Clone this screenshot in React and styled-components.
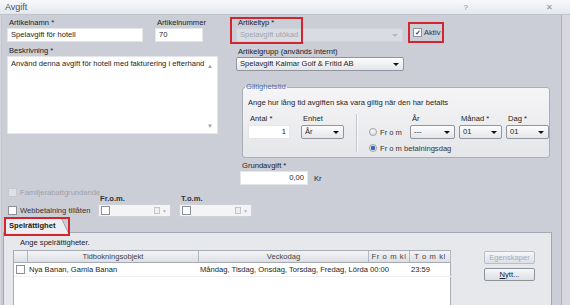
import React from 'react';
import styled, { createGlobalStyle, css } from 'styled-components';

const GlobalStyle = createGlobalStyle`
  html, body { margin: 0; padding: 0; }
  body {
    width: 570px;
    height: 305px;
    overflow: hidden;
    background: #d6d8de;
    font-family: "Liberation Sans", Arial, sans-serif;
    font-size: 7.6px;
    color: #1e1e1e;
  }
`;

const Window = styled.div`
  width: 570px;
  height: 305px;
  display: flex;
  flex-direction: column;
`;

const TitleBar = styled.div`
  height: 14px;
  flex: none;
  display: flex;
  align-items: center;
  justify-content: space-between;
  padding: 0 0 0 5px;
  background: linear-gradient(#f7f8fa, #e4e7ec);
  border-bottom: 1px solid #bfc3cb;
`;

const TitleText = styled.span`
  font-size: 9px;
  color: #4d5362;
`;

const TitleActions = styled.div`
  display: flex;
  gap: 78px;
  padding-right: 17px;
  color: #8a8f99;
  font-size: 8px;
`;

const Frame = styled.div`
  flex: 1;
  display: flex;
  min-height: 0;
`;

const Content = styled.div`
  width: 558px;
  background: #cbced7;
  border-left: 1px solid #c3c6ce;
  border-right: 1px solid #aeb2bc;
  margin-left: 1px;
  padding-left: 1px;
  overflow: hidden;
`;

const TopGrid = styled.div`
  display: grid;
  grid-template-columns: 212px 314px;
  column-gap: 17px;
  margin-left: 4px;
  padding-top: 3px;
`;

const Column = styled.div`
  display: flex;
  flex-direction: column;
`;

const FieldRow = styled.div`
  position: relative;
  display: flex;
  align-items: flex-start;
  gap: ${(p) => p.gap || 0}px;
`;

const Field = styled.div`
  display: flex;
  flex-direction: column;
  width: ${(p) => p.w}px;
  margin-top: ${(p) => p.mt || 0}px;
  margin-left: ${(p) => p.ml || 0}px;
`;

const Label = styled.div`
  height: ${(p) => p.h || 10}px;
  line-height: 10px;
  padding-left: 2px;
  color: ${(p) => (p.strong ? '#333' : '#222')};
  font-weight: ${(p) => (p.strong ? 'bold' : 'normal')};
  white-space: nowrap;
`;

const Unit = styled.span`
  margin-top: 16px;
  line-height: 10px;
  color: #222;
`;

const TextInput = styled.div`
  height: 14px;
  box-sizing: border-box;
  background: #fff;
  border: 1px solid #e4e6ea;
  padding: 0 3px;
  line-height: 12px;
  text-align: ${(p) => (p.right ? 'right' : 'left')};
  white-space: nowrap;
`;

const TextArea = styled.div`
  position: relative;
  height: 78px;
  width: 211px;
  box-sizing: border-box;
  background: #fff;
  border: 1px solid #e4e6ea;
  padding: 2px 14px 0 3px;
  line-height: 10px;
  white-space: nowrap;
`;

const ScrollArrow = styled.span`
  position: absolute;
  right: 4px;
  ${(p) => (p.down ? 'bottom: 2px;' : 'top: 4px;')}
  font-size: 6px;
  color: #9a9ea6;
`;

const Combo = styled.div`
  position: relative;
  height: 14px;
  box-sizing: border-box;
  border-radius: 2px;
  padding: 0 14px 0 3px;
  line-height: 12px;
  white-space: nowrap;
  ${(p) =>
    p.disabled
      ? css`
          background: #dadce3;
          border: 1px solid #d2d4db;
          color: #a2a5ae;
        `
      : css`
          background: linear-gradient(#fdfdfe, #e3e5e9);
          border: 1px solid #8f949d;
          color: #1e1e1e;
        `}
`;

const Arrow = styled.span`
  position: absolute;
  right: 4px;
  top: 5px;
  width: 0;
  height: 0;
  border-left: 3px solid transparent;
  border-right: 3px solid transparent;
  border-top: 3px solid ${(p) => (p.light ? '#b5b8c0' : '#111')};
`;

const Highlight = styled.div`
  position: absolute;
  left: ${(p) => p.x}px;
  top: ${(p) => p.y}px;
  width: ${(p) => p.w}px;
  height: ${(p) => p.h}px;
  box-sizing: border-box;
  border: 2px solid #d1262f;
  pointer-events: none;
  z-index: 3;
`;

const AktivBox = styled.div`
  display: flex;
  align-items: center;
  gap: 2px;
  margin: 4px 0 0 5px;
  width: 36px;
  height: 21px;
  box-sizing: border-box;
  border: 2px solid #d1262f;
  padding-left: 3px;
`;

const CheckBox = styled.span`
  display: inline-flex;
  align-items: center;
  justify-content: center;
  flex: none;
  width: 9px;
  height: 9px;
  box-sizing: border-box;
  border: 1px solid ${(p) => (p.disabled ? '#c5c8cf' : '#8b9099')};
  background: ${(p) => (p.disabled ? '#dfe1e6' : '#fff')};
  color: #2b3f73;
  font-size: 7px;
  line-height: 7px;
  font-weight: bold;
`;

const CheckText = styled.span`
  color: ${(p) => (p.muted ? '#9ea1aa' : '#333')};
  white-space: nowrap;
`;

const GroupBox = styled.div`
  position: relative;
  margin: 16px 0 0 6px;
  width: 308px;
  height: 71px;
  box-sizing: border-box;
  border: 1px solid #a9adb6;
  border-radius: 3px;
  background: linear-gradient(#f5f5f7, #e5e6e9);
  padding: 10px 0 0 5px;
`;

const Legend = styled.span`
  position: absolute;
  left: 2px;
  top: -6px;
  padding: 0 1px;
  line-height: 10px;
  color: #4a6fae;
  background: linear-gradient(#cbced7 50%, #f5f5f7 50%);
`;

const GroupText = styled.div`
  line-height: 10px;
  white-space: nowrap;
`;

const GroupRow = styled.div`
  display: flex;
  align-items: flex-start;
  margin-top: 6px;
`;

const Separator = styled.div`
  width: 1px;
  height: 38px;
  margin: 0 11px 0 12px;
  background: #c2c5cc;
  border-right: 1px solid #fafafa;
`;

const RadioPart = styled.div`
  display: grid;
  grid-template-columns: 37px 45px 43px 43px;
  column-gap: 4px;
  row-gap: 2px;
`;

const RadioRow = styled.div`
  display: flex;
  align-items: center;
  gap: 3px;
  height: 14px;
  margin-top: ${(p) => p.mt || 0}px;
  grid-column: ${(p) => p.span || 'auto'};
  white-space: nowrap;
  color: #333;
`;

const Radio = styled.span`
  flex: none;
  width: 8px;
  height: 8px;
  box-sizing: border-box;
  border-radius: 50%;
  border: 1px solid #9ca0a8;
  background: ${(p) =>
    p.checked
      ? 'radial-gradient(circle, #3a66b0 0 2px, #e7ebf2 2.5px)'
      : 'linear-gradient(#fafafa, #dfe1e5)'};
`;

const Options = styled.div`
  display: flex;
  align-items: flex-start;
  height: 30px;
  margin: 2px 0 0 5px;
`;

const CheckColumn = styled.div`
  display: flex;
  flex-direction: column;
  gap: 8px;
  width: 90px;
`;

const CheckRow = styled.div`
  display: flex;
  align-items: center;
  gap: 3px;
  height: 10px;
`;

const DatePicker = styled.div`
  display: flex;
  align-items: center;
  justify-content: space-between;
  height: 13px;
  box-sizing: border-box;
  background: #f4f4f6;
  border: 1px solid #cfd1d7;
  padding: 0 3px 0 2px;
`;

const CalendarIcon = styled.span`
  display: flex;
  align-items: center;
  gap: 2px;
  color: #b1b4bb;
  font-size: 5px;
`;

const CalendarPage = styled.span`
  width: 6px;
  height: 7px;
  box-sizing: border-box;
  border: 1px solid #c2c5cc;
  background: #eceef1;
`;

const TabArea = styled.div`
  position: relative;
  width: 549px;
`;

const TabStrip = styled.div`
  height: 15px;
  display: flex;
  padding-left: 2px;
`;

const Tab = styled.div`
  position: relative;
  z-index: 1;
  width: 64px;
  height: 16px;
  font-weight: bold;
  line-height: 17px;
  color: #1a1a1a;
`;

const TabShape = styled.svg`
  position: absolute;
  left: 0;
  top: 0;
`;

const TabLabel = styled.span`
  position: relative;
  padding-left: 4px;
`;

const TabPanel = styled.div`
  height: 80px;
  box-sizing: border-box;
  border: 1px solid #a3a7b1;
  background: #e7e8ec;
  padding: 5px 0 0 9px;
`;

const PanelText = styled.div`
  line-height: 10px;
  padding-left: 7px;
  color: #222;
`;

const PanelBody = styled.div`
  display: flex;
  align-items: flex-start;
  margin-top: 2px;
`;

const Table = styled.div`
  width: 438px;
  height: 60px;
  box-sizing: border-box;
  border: 1px solid #a8acb4;
  background: #fff;
`;

const TableGrid = styled.div`
  display: grid;
  grid-template-columns: 14px 171px 170px 41px 41px;
`;

const HeadCell = styled.div`
  height: 12px;
  line-height: 12px;
  box-sizing: border-box;
  background: linear-gradient(#f3f4f6, #dcdfe4);
  border-right: 1px solid #b3b7bf;
  border-bottom: 1px solid #a5a9b2;
  text-align: center;
  letter-spacing: ${(p) => (p.spaced ? 0.6 : 0)}px;
  color: #444;
  white-space: nowrap;
  overflow: hidden;
`;

const Cell = styled.div`
  height: 13px;
  line-height: 13px;
  padding-left: ${(p) => (p.pad ? p.pad : 1)}px;
  white-space: nowrap;
  overflow: hidden;
  display: flex;
  align-items: center;
  border-bottom: 1px solid #eef0f3;
`;

const ButtonColumn = styled.div`
  display: flex;
  flex-direction: column;
  gap: 4px;
  margin: 1px 0 0 33px;
`;

const Button = styled.div`
  width: 51px;
  height: 13px;
  box-sizing: border-box;
  border-radius: 2px;
  border: 1px solid ${(p) => (p.disabled ? '#babec6' : '#8d929b')};
  background: linear-gradient(#f6f7f9, #dcdfe4);
  color: ${(p) => (p.disabled ? '#a8acb5' : '#222')};
  text-align: center;
  line-height: 11px;
`;

const DateBox = ({ label, ml }) => (
  <Field w={73} mt={7} ml={ml}>
    <Label strong>{label}</Label>
    <DatePicker>
      <CheckBox />
      <CalendarIcon>
        <CalendarPage />▼
      </CalendarIcon>
    </DatePicker>
  </Field>
);

const Select = ({ children }) => (
  <Combo>
    {children}
    <Arrow />
  </Combo>
);

export default function App() {
  return (
    <>
      <GlobalStyle />
      <Window>
        <TitleBar>
          <TitleText>Avgift</TitleText>
          <TitleActions>
            <span>?</span>
            <span>✕</span>
          </TitleActions>
        </TitleBar>
        <Frame>
          <Content>
            <TopGrid>
              <Column>
                <FieldRow gap={12}>
                  <Field w={136}>
                    <Label>Artikelnamn *</Label>
                    <TextInput>Spelavgift för hotell</TextInput>
                  </Field>
                  <Field w={48}>
                    <Label>Artikelnummer</Label>
                    <TextInput>70</TextInput>
                  </Field>
                </FieldRow>
                <Field w={211} mt={4}>
                  <Label>Beskrivning *</Label>
                  <TextArea>
                    Använd denna avgift för hotell med fakturering i efterhand
                    <ScrollArrow>▲</ScrollArrow>
                    <ScrollArrow down>▼</ScrollArrow>
                  </TextArea>
                </Field>
              </Column>

              <Column>
                <FieldRow>
                  <Field w={167}>
                    <Label>Artikeltyp *</Label>
                    <Combo disabled>
                      Spelavgift utökad
                      <Arrow light />
                    </Combo>
                  </Field>
                  <Highlight x={-6} y={-1} w={73} h={27} />
                  <AktivBox>
                    <CheckBox>✓</CheckBox>
                    <CheckText>Aktiv</CheckText>
                  </AktivBox>
                </FieldRow>
                <Field w={168} mt={4}>
                  <Label>Artikelgrupp (används internt)</Label>
                  <Select>Spelavgift Kalmar Golf &amp; Fritid AB</Select>
                </Field>

                <GroupBox>
                  <Legend>Giltighetstid</Legend>
                  <GroupText>Ange hur lång tid avgiften ska vara giltig när den har betalts</GroupText>
                  <GroupRow>
                    <Field w={43}>
                      <Label h={11}>Antal *</Label>
                      <TextInput right>1</TextInput>
                    </Field>
                    <Field w={44} ml={11}>
                      <Label h={11}>Enhet</Label>
                      <Select>År</Select>
                    </Field>
                    <Separator />
                    <RadioPart>
                      <RadioRow mt={11}>
                        <Radio />
                        Fr o m
                      </RadioRow>
                      <Field w={45}>
                        <Label h={11}>År</Label>
                        <Select>---</Select>
                      </Field>
                      <Field w={43}>
                        <Label h={11}>Månad *</Label>
                        <Select>01</Select>
                      </Field>
                      <Field w={43}>
                        <Label h={11}>Dag *</Label>
                        <Select>01</Select>
                      </Field>
                      <RadioRow span="1 / span 3">
                        <Radio checked />
                        Fr o m betalningsdag
                      </RadioRow>
                    </RadioPart>
                  </GroupRow>
                </GroupBox>

                <FieldRow gap={6}>
                  <Field w={68} mt={3} ml={4}>
                    <Label>Grundavgift *</Label>
                    <TextInput right>0,00</TextInput>
                  </Field>
                  <Unit>Kr</Unit>
                </FieldRow>
              </Column>
            </TopGrid>

            <Options>
              <CheckColumn>
                <CheckRow>
                  <CheckBox disabled />
                  <CheckText muted>Familjerabattgrundande</CheckText>
                </CheckRow>
                <CheckRow>
                  <CheckBox />
                  <CheckText>Webbetalning tillåten</CheckText>
                </CheckRow>
              </CheckColumn>
              <DateBox label="Fr.o.m." />
              <DateBox label="T.o.m." ml={8} />
            </Options>

            <TabArea>
              <TabStrip>
                <Tab>
                  <TabShape width="64" height="16" viewBox="0 0 64 16">
                    <path
                      d="M0.5 16 V3 Q0.5 0.5 3 0.5 H56 L63.5 16"
                      fill="#eceef2"
                      stroke="#9ba0aa"
                    />
                  </TabShape>
                  <TabLabel>Spelrättighet</TabLabel>
                </Tab>
              </TabStrip>
              <Highlight x={1} y={0} w={66} h={19} />
              <TabPanel>
                <PanelText>Ange spelrättigheter.</PanelText>
                <PanelBody>
                  <Table>
                    <TableGrid>
                      <HeadCell />
                      <HeadCell>Tidbokningsobjekt</HeadCell>
                      <HeadCell>Veckodag</HeadCell>
                      <HeadCell spaced>Fr o m kl</HeadCell>
                      <HeadCell spaced>T o m kl</HeadCell>
                      <Cell pad={2}>
                        <CheckBox />
                      </Cell>
                      <Cell>Nya Banan, Gamla Banan</Cell>
                      <Cell>Måndag, Tisdag, Onsdag, Torsdag, Fredag, Lörda</Cell>
                      <Cell>00:00</Cell>
                      <Cell>23:59</Cell>
                    </TableGrid>
                  </Table>
                  <ButtonColumn>
                    <Button disabled>Egenskaper</Button>
                    <Button>
                      <u>N</u>ytt...
                    </Button>
                  </ButtonColumn>
                </PanelBody>
              </TabPanel>
            </TabArea>
          </Content>
        </Frame>
      </Window>
    </>
  );
}
